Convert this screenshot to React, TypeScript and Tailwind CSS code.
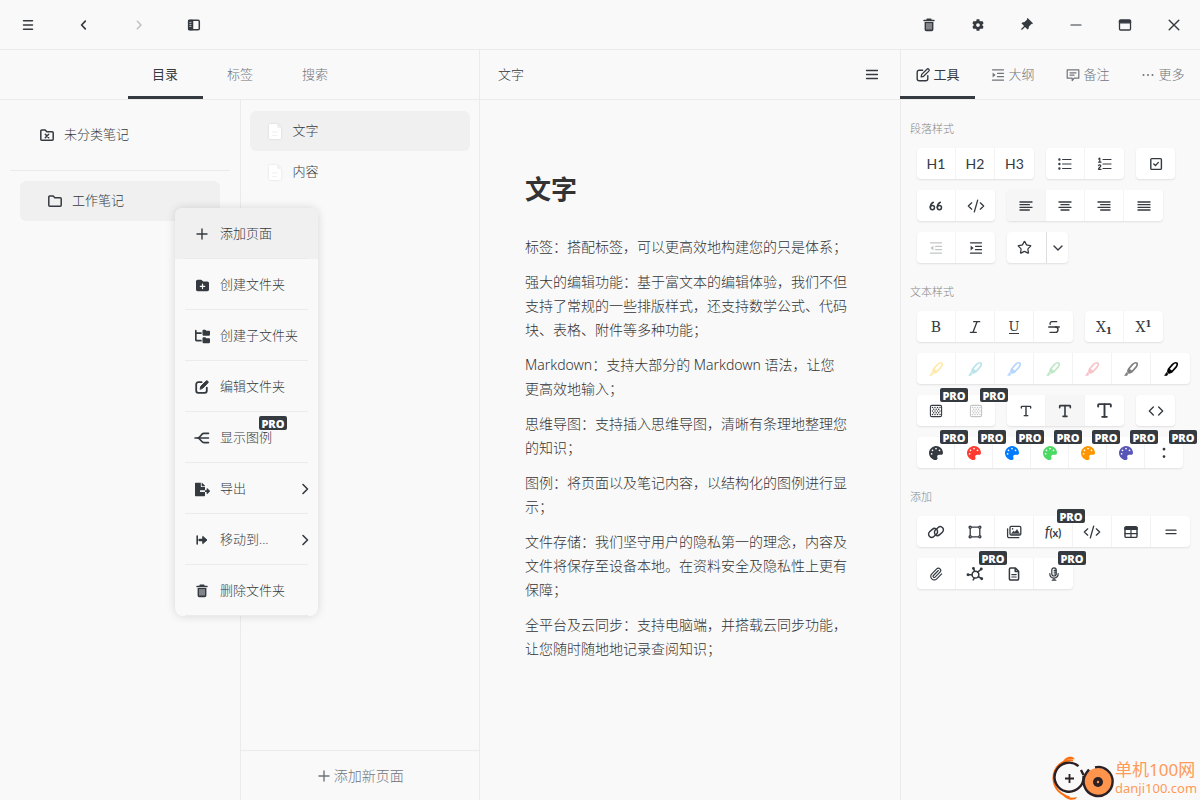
import type { ReactNode } from "react";
import { FaCog, FaFileExport, FaPalette } from "react-icons/fa";
import { FaFolderPlus, FaFolderTree } from "react-icons/fa6";
import { RiPushpinFill } from "react-icons/ri";
import {
  FiAlignCenter,
  FiAlignJustify,
  FiAlignLeft,
  FiAlignRight,
  FiCode,
} from "react-icons/fi";
import { Italic, Paperclip, Star, Strikethrough, Type } from "lucide-react";
import clsx from "clsx";

interface IconProps {
  children: ReactNode;
  width?: number;
  className?: string;
}

function Icon({ children, width = 1.5, className = "size-4" }: IconProps) {
  return (
    <svg
      viewBox="0 0 16 16"
      fill="none"
      stroke="currentColor"
      strokeWidth={width}
      strokeLinecap="round"
      strokeLinejoin="round"
      className={clsx("shrink-0", className)}
      aria-hidden="true"
    >
      {children}
    </svg>
  );
}

const TrashIcon = () => (
  <Icon width={1}>
    <path d="M3 3.6h10M6.2 3.2V2.3h3.6v.9" strokeWidth="1.5" />
    <path d="M3.6 5h8.8v7.6a1.6 1.6 0 0 1-1.6 1.6H5.2a1.6 1.6 0 0 1-1.6-1.6z" fill="currentColor" stroke="none" />
    <path d="M6 6.5v5.6M8 6.5v5.6M10 6.5v5.6" stroke="#f9f9f9" strokeWidth=".8" />
  </Icon>
);

const EditIcon = ({ bold = false }: { bold?: boolean }) => (
  <Icon width={bold ? 1.8 : 1.4}>
    <path d="M7.6 3.2H4.2a2 2 0 0 0-2 2v6.6a2 2 0 0 0 2 2h6.6a2 2 0 0 0 2-2V8.6" />
    <path
      d="M6.2 9.9l.5-2.5 5.2-5.2a1.3 1.3 0 0 1 1.9 1.9L8.6 9.3z"
      fill={bold ? "currentColor" : "none"}
      strokeWidth={bold ? 1 : 1.3}
    />
  </Icon>
);

const FolderIcon = ({ crossed = false }: { crossed?: boolean }) => (
  <Icon>
    <path d="M1.8 3.9a1 1 0 0 1 1-1h3.4l1.6 1.8h5.4a1 1 0 0 1 1 1v6.6a1 1 0 0 1-1 1H2.8a1 1 0 0 1-1-1z" />
    {crossed && <path d="M6.3 7.3l3.4 3.4M9.7 7.3l-3.4 3.4" />}
  </Icon>
);

const PageIcon = () => (
  <svg
    viewBox="0 0 12 15"
    className="h-[15px] w-3 drop-shadow-[0_0_1px_rgba(0,0,0,0.12)]"
    aria-hidden="true"
  >
    <path d="M1.5 0H8l4 4v9.5a1.5 1.5 0 0 1-1.5 1.5h-9A1.5 1.5 0 0 1 0 13.5v-12A1.5 1.5 0 0 1 1.5 0z" fill="#fff" />
    <path d="M8 0v3a1 1 0 0 0 1 1h3zM3 7.5h6v1H3zM3 11h5v1H3z" fill="#f1f1f1" />
  </svg>
);

const PlusIcon = () => (
  <Icon width={1.4}>
    <path d="M8 3v10M3 8h10" />
  </Icon>
);

const ChevronRight = () => (
  <Icon width={1.6}>
    <path d="M6 3.5L10.5 8 6 12.5" />
  </Icon>
);

const SlashCode = () => (
  <Icon width={1.2} className="size-[18px]">
    <path d="M4.2 5.2L1.2 8l3 2.8M11.8 5.2l3 2.8-3 2.8M9.5 2.8l-3 10.4" />
  </Icon>
);

const IndentIcon = ({ outdent = false }: { outdent?: boolean }) => (
  <Icon width={1.3}>
    <path d="M2.5 2.8h11M7.5 6.3h6M7.5 9.7h6M2.5 13.2h11" />
    <path d={outdent ? "M5.4 5.4v5.2L2.4 8z" : "M2.6 5.4v5.2l3-2.6z"} fill="currentColor" stroke="none" />
  </Icon>
);

const MarkerIcon = ({ color }: { color: string }) => (
  <svg viewBox="0 0 16 16" fill="none" className="size-4" aria-hidden="true">
    <path
      d="M5.6 8l4-4.6c1.6-1.500 3.400-1.900 4.300-1.300.6.800.2 2.500-1.100 4.300l-3.900 4.400z"
      stroke={color}
      strokeWidth="1.7"
      strokeLinejoin="round"
    />
    <path d="M5.200 7.600l4.200 3.600-1.500 1.100c-1.400.8-2.700.4-3.400-.4-.7-.9-.6-2.400.7-4.300z" fill={color} />
    <path d="M3.600 11.400l1.400 1.500-1 1.600H1.600z" fill={color} stroke={color} strokeLinejoin="round" strokeWidth=".6" />
  </svg>
);

const MosaicIcon = () => (
  <Icon width={1.1}>
    <rect x="2.4" y="2.4" width="11.2" height="11.2" rx="1.4" />
    <path
      d="M4.5 4.5h0M7 4.5h0M9.5 4.5h0M12 4.5h0M5.7 6.2h0M8.2 6.2h0M10.7 6.2h0M4.5 8h0M7 8h0M9.5 8h0M12 8h0M5.7 9.8h0M8.2 9.8h0M10.7 9.8h0M4.5 11.6h0M7 11.6h0M9.5 11.6h0M12 11.6h0"
      strokeWidth="1.5"
    />
  </Icon>
);

const CheckboxIcon = () => (
  <Icon width={1.4}>
    <rect x="2.8" y="2.6" width="10.6" height="10.8" rx="1" />
    <path d="M5.8 8l1.7 1.6 2.9-3.2" />
  </Icon>
);

const BulletsIcon = () => (
  <Icon width={1.2}>
    <path d="M5.6 3.5h8.4M5.6 8h8.4M5.6 12.5h8.4" />
    <path d="M2.4 3.5h0M2.4 8h0M2.4 12.5h0" strokeWidth="2.4" />
  </Icon>
);

const NumbersIcon = () => (
  <Icon width={1.2}>
    <path d="M6 3.5h8M6 8h8M6 12.5h8" />
    <path d="M1.6 3l1.2-.9v4M1.6 6.2h2.4M1.5 9.6c.4-1 2.3-1 2.3.3 0 1-2.3 1.9-2.3 3.4H4" />
  </Icon>
);

const LinkIcon = () => (
  <Icon width={1.3} className="size-[18px]">
    <rect x="-4.4" y="-2.8" width="8.8" height="5.6" rx="2.8" transform="translate(5.4 8.8) rotate(-42)" />
    <rect x="-4.4" y="-2.8" width="8.8" height="5.6" rx="2.8" transform="translate(10.6 7.2) rotate(-42)" />
  </Icon>
);

const BoundingIcon = () => (
  <Icon width={1.3}>
    <path d="M4.8 3.2h6.4M4.8 12.8h6.4M3.2 4.8v6.4M12.8 4.8v6.4" />
    <circle cx="3.2" cy="3.2" r="1.1" />
    <circle cx="12.8" cy="3.2" r="1.1" />
    <circle cx="3.2" cy="12.8" r="1.1" />
    <circle cx="12.8" cy="12.8" r="1.1" />
  </Icon>
);

const ImagesIcon = () => (
  <Icon width={1.3}>
    <rect x="4" y="2.4" width="10.8" height="8.6" rx="1.2" />
    <path d="M1.6 4.8v7.4a1.5 1.5 0 0 0 1.5 1.5h9.7" />
    <path d="M5.6 9.6L7.6 7l1.2 1.2L11 5.6l2.4 4z" fill="currentColor" strokeWidth=".6" />
    <path d="M6.6 4.9h0" strokeWidth="1.6" />
  </Icon>
);

const TableIcon = () => (
  <Icon width={1.4}>
    <rect x="2" y="2.6" width="12" height="10.8" rx="1.2" />
    <path d="M2 3.6h12v1.6H2z" fill="currentColor" />
    <path d="M8 6v7.4M2 9.7h12" strokeWidth="1.2" />
  </Icon>
);

const MindMapIcon = () => (
  <Icon width={1.4} className="size-[18px]">
    <circle cx="8.4" cy="8.6" r="3" />
    <path d="M5.4 8.6H2M10.4 6.4l3-2.6M11 10.4l2.8 1.6M7.6 5.6l-.8-2.2M7.4 11.6l-1 1.6" />
    <path d="M1.8 8.6h0M13.6 3.6h0M14 12.2h0M6.6 3h0" strokeWidth="2.6" />
  </Icon>
);

const DocumentIcon = () => (
  <Icon width={1.5}>
    <path d="M3.4 3.2a1.2 1.2 0 0 1 1.2-1.2h4.8l3.2 3.2v7.6a1.2 1.2 0 0 1-1.2 1.2H4.6a1.2 1.2 0 0 1-1.2-1.2zM9.2 2.2v3.2h3.2" />
    <path d="M5.8 8.6h4.4M5.8 11h4.4" strokeWidth="1.2" />
  </Icon>
);

const MicIcon = () => (
  <Icon width={1.2}>
    <rect x="5.8" y="1.8" width="4.4" height="8.2" rx="2.2" />
    <path d="M3.8 7.6c0 6 8.4 6 8.4 0M8 12.2v1.8M6.2 14.2h3.6M8.2 4.4h1.6M8.2 6.2h1.6M8.2 8h1.6" />
  </Icon>
);

function ProBadge({ className }: { className?: string }) {
  return (
    <span
      className={clsx(
        "pointer-events-none absolute z-10 flex h-[14px] w-7 items-center justify-center rounded-xs bg-[#343a40] font-['Open_Sans',sans-serif] text-[11px] leading-none font-extrabold text-white",
        className,
      )}
    >
      PRO
    </span>
  );
}

interface Tool {
  label: string;
  icon: ReactNode;
  pro?: boolean;
  active?: boolean;
  disabled?: boolean;
}

const groupStyle = "flex h-[31px] rounded-sm bg-white shadow-[0_1px_2px_rgba(0,0,0,0.1)]";

function ToolGroup({ tools, narrow = false }: { tools: Tool[]; narrow?: boolean }) {
  return (
    <div className={clsx(groupStyle, "divide-x divide-[#f3f3f3]")}>
      {tools.map((tool) => (
        <button
          key={tool.label}
          type="button"
          aria-label={tool.label}
          disabled={tool.disabled}
          className={clsx(
            "relative flex items-center justify-center first:rounded-l-sm last:rounded-r-sm",
            narrow ? "w-[38px]" : "w-[39px]",
            tool.active && "bg-[#f6f6f6]",
            tool.disabled && "text-[#c4c5c7]",
          )}
        >
          {tool.icon}
          {tool.pro && <ProBadge className={clsx("-top-[7px]", narrow ? "-right-[14px]" : "-right-[13px]")} />}
        </button>
      ))}
    </div>
  );
}

function ToolSection({ title, children }: { title: string; children: ReactNode }) {
  return (
    <section className="pt-[21px]">
      <h2 className="mb-[11px] pl-[9px] text-[11px] leading-4 text-[#888]">{title}</h2>
      <div className="flex flex-col gap-[11px] pl-4">{children}</div>
    </section>
  );
}

const Row = ({ children }: { children: ReactNode }) => <div className="flex gap-3">{children}</div>;

const Heading = ({ children }: { children: ReactNode }) => (
  <span className="font-['Lato',sans-serif] text-sm font-normal">{children}</span>
);

const Slab = ({ children }: { children: ReactNode }) => (
  <span className="font-['DejaVu_Serif',serif] text-sm leading-4 font-normal">{children}</span>
);

const highlights = [
  { label: "黄色高亮", color: "#ffe9ad" },
  { label: "青色高亮", color: "#b9e4ea" },
  { label: "蓝色高亮", color: "#b5d6ff" },
  { label: "绿色高亮", color: "#bfe8c8" },
  { label: "红色高亮", color: "#f7c3c9" },
  { label: "灰色高亮", color: "#808080" },
  { label: "黑色高亮", color: "#000000" },
];

const palette: Tool[] = [
  { label: "默认颜色", icon: <FaPalette className="size-[14px]" />, pro: true },
  { label: "红色", icon: <FaPalette className="size-[14px] text-[#ff3b30]" />, pro: true },
  { label: "蓝色", icon: <FaPalette className="size-[14px] text-[#007aff]" />, pro: true },
  { label: "绿色", icon: <FaPalette className="size-[14px] text-[#4cd964]" />, pro: true },
  { label: "橙色", icon: <FaPalette className="size-[14px] text-[#ff9500]" />, pro: true },
  { label: "紫色", icon: <FaPalette className="size-[14px] text-[#5856b6]" />, pro: true },
  {
    label: "更多颜色",
    icon: (
      <Icon width={2.8}>
        <path d="M8 4.2h0M8 11.6h0" />
      </Icon>
    ),
    pro: true,
  },
];

function ToolPanel() {
  return (
    <div>
      <ToolSection title="段落样式">
        <Row>
          <ToolGroup
            tools={[
              { label: "标题1", icon: <Heading>H1</Heading> },
              { label: "标题2", icon: <Heading>H2</Heading> },
              { label: "标题3", icon: <Heading>H3</Heading> },
            ]}
          />
          <ToolGroup
            tools={[
              { label: "无序列表", icon: <BulletsIcon /> },
              { label: "有序列表", icon: <NumbersIcon /> },
            ]}
          />
          <ToolGroup tools={[{ label: "待办", icon: <CheckboxIcon /> }]} />
        </Row>
        <Row>
          <ToolGroup
            tools={[
              {
                label: "引用",
                icon: (
                  <Icon width={1.5}>
                    <circle cx="4.4" cy="9.6" r="2.1" />
                    <circle cx="11.4" cy="9.6" r="2.1" />
                    <path d="M2.3 9.4c0-2.4.8-4.2 3-5.2M9.3 9.4c0-2.4.8-4.2 3-5.2" />
                  </Icon>
                ),
              },
              { label: "代码块", icon: <SlashCode /> },
            ]}
          />
          <ToolGroup
            tools={[
              { label: "左对齐", icon: <FiAlignLeft className="size-4" />, active: true },
              { label: "居中", icon: <FiAlignCenter className="size-4" /> },
              { label: "右对齐", icon: <FiAlignRight className="size-4" /> },
              { label: "两端对齐", icon: <FiAlignJustify className="size-4" /> },
            ]}
          />
        </Row>
        <Row>
          <ToolGroup
            tools={[
              { label: "减少缩进", icon: <IndentIcon outdent />, disabled: true },
              { label: "增加缩进", icon: <IndentIcon /> },
            ]}
          />
          <div className={groupStyle}>
            <button type="button" aria-label="收藏" className="flex w-[39px] items-center justify-center pr-1">
              <Star className="size-[15px]" />
            </button>
            <button
              type="button"
              aria-label="更多收藏"
              className="flex w-[22px] items-center justify-center border-l border-[#ddd]"
            >
              <Icon width={1.4}>
                <path d="M4 6l4 4 4-4" />
              </Icon>
            </button>
          </div>
        </Row>
      </ToolSection>

      <ToolSection title="文本样式">
        <Row>
          <ToolGroup
            tools={[
              { label: "加粗", icon: <Slab>B</Slab> },
              { label: "斜体", icon: <Italic className="size-4" /> },
              {
                label: "下划线",
                icon: (
                  <span className="flex border-b border-current leading-none">
                    <span className="font-['DejaVu_Serif',serif] text-[13px] leading-[13px] font-normal">U</span>
                  </span>
                ),
              },
              { label: "删除线", icon: <Strikethrough className="size-4" /> },
            ]}
          />
          <ToolGroup
            tools={[
              {
                label: "下标",
                icon: (
                  <Slab>
                    X<sub className="text-[9px] font-bold">1</sub>
                  </Slab>
                ),
              },
              {
                label: "上标",
                icon: (
                  <Slab>
                    X<sup className="text-[9px] font-bold">1</sup>
                  </Slab>
                ),
              },
            ]}
          />
        </Row>
        <Row>
          <ToolGroup
            tools={highlights.map((item) => ({
              label: item.label,
              icon: <MarkerIcon color={item.color} />,
            }))}
          />
        </Row>
        <Row>
          <ToolGroup
            tools={[
              { label: "马赛克", icon: <MosaicIcon />, pro: true },
              { label: "清除马赛克", icon: <MosaicIcon />, pro: true, disabled: true },
            ]}
          />
          <ToolGroup
            tools={[
              { label: "小号文字", icon: <Type className="size-[14px]" strokeWidth={2.4} /> },
              { label: "中号文字", icon: <Type className="size-4" strokeWidth={2.4} />, active: true },
              { label: "大号文字", icon: <Type className="size-[19px]" strokeWidth={2.4} /> },
            ]}
          />
          <ToolGroup tools={[{ label: "行内代码", icon: <FiCode className="size-4" /> }]} />
        </Row>
        <Row>
          <ToolGroup narrow tools={palette} />
        </Row>
      </ToolSection>

      <ToolSection title="添加">
        <Row>
          <ToolGroup
            tools={[
              { label: "链接", icon: <LinkIcon /> },
              { label: "画板", icon: <BoundingIcon /> },
              { label: "图片", icon: <ImagesIcon /> },
              {
                label: "公式",
                icon: (
                  <span className="flex items-baseline font-['Lato',sans-serif] text-[15px] leading-4 font-normal">
                    <i>f</i>
                    <span className="text-[11px] font-bold">(x)</span>
                  </span>
                ),
                pro: true,
              },
              { label: "代码", icon: <SlashCode /> },
              { label: "表格", icon: <TableIcon /> },
              {
                label: "分割线",
                icon: (
                  <Icon width={1.3}>
                    <path d="M3 6.2h10M3 9.6h10" />
                  </Icon>
                ),
              },
            ]}
          />
        </Row>
        <Row>
          <ToolGroup
            tools={[
              { label: "附件", icon: <Paperclip className="size-[14px]" /> },
              { label: "思维导图", icon: <MindMapIcon />, pro: true },
              { label: "文档", icon: <DocumentIcon /> },
              { label: "录音", icon: <MicIcon />, pro: true },
            ]}
          />
        </Row>
      </ToolSection>
    </div>
  );
}

interface MenuItem {
  label: string;
  icon: ReactNode;
  active?: boolean;
  pro?: boolean;
  submenu?: boolean;
}

const menuItems: MenuItem[] = [
  { label: "添加页面", icon: <PlusIcon />, active: true },
  { label: "创建文件夹", icon: <FaFolderPlus className="size-[13px]" /> },
  { label: "创建子文件夹", icon: <FaFolderTree className="size-[15px]" /> },
  { label: "编辑文件夹", icon: <EditIcon bold /> },
  {
    label: "显示图例",
    icon: (
      <Icon width={1.6}>
        <path d="M1 8h13.5M3 8c4.2 0 3.6-4.6 6.8-4.6h4.7M3 8c4.2 0 3.6 4.6 6.8 4.6h4.7" />
      </Icon>
    ),
    pro: true,
  },
  { label: "导出", icon: <FaFileExport className="size-[15px]" />, submenu: true },
  {
    label: "移动到...",
    icon: (
      <Icon width={1.6}>
        <path d="M3.2 4v8" />
        <path d="M9 4.6L13 8l-4 3.4z" fill="currentColor" strokeWidth="1" />
        <path d="M5.5 8H9" strokeWidth="2.4" />
      </Icon>
    ),
    submenu: true,
  },
  { label: "删除文件夹", icon: <TrashIcon /> },
];

function ContextMenu() {
  return (
    <ul
      role="menu"
      className="absolute top-[27px] left-[155px] z-20 w-[143px] overflow-hidden rounded-lg bg-[#f9f9f9] shadow-[0_0_10px_rgba(0,0,0,0.14)]"
    >
      {menuItems.map((item) => (
        <li key={item.label} role="none" className={clsx("px-[10px]", item.active && "bg-[#f0f0f0]")}>
          <button
            type="button"
            role="menuitem"
            className="flex h-[51px] w-full items-center border-b border-[#ebebeb] pt-[2px] text-left"
          >
            <span className="flex w-[35px] justify-center pr-px">{item.icon}</span>
            <span className="relative grow">
              {item.label}
              {item.pro && <ProBadge className="-top-3 left-[39px]" />}
            </span>
            {item.submenu && (
              <span className="-mr-[5px]">
                <ChevronRight />
              </span>
            )}
          </button>
        </li>
      ))}
    </ul>
  );
}

interface TabProps {
  label: string;
  icon?: ReactNode;
  active?: boolean;
}

function Tab({ label, icon, active }: TabProps) {
  return (
    <button
      type="button"
      role="tab"
      aria-selected={!!active}
      className={clsx(
        "flex w-[75px] items-center justify-center gap-[2px] border-b-[3px] pt-[3px]",
        active ? "border-[#343a40] font-normal text-[#343a40]" : "border-transparent text-[#70747a]",
      )}
    >
      {icon}
      {label}
    </button>
  );
}

const paragraphs = [
  "标签：搭配标签，可以更高效地构建您的只是体系；",
  "强大的编辑功能：基于富文本的编辑体验，我们不但支持了常规的一些排版样式，还支持数学公式、代码块、表格、附件等多种功能；",
  "Markdown：支持大部分的 Markdown 语法，让您更高效地输入；",
  "思维导图：支持插入思维导图，清晰有条理地整理您的知识；",
  "图例：将页面以及笔记内容，以结构化的图例进行显示；",
  "文件存储：我们坚守用户的隐私第一的理念，内容及文件将保存至设备本地。在资料安全及隐私性上更有保障；",
  "全平台及云同步：支持电脑端，并搭载云同步功能，让您随时随地地记录查阅知识；",
];

const windowButton = "flex h-full w-[49px] items-center justify-center";

function TitleBar() {
  return (
    <header className="flex h-[50px] shrink-0 items-center justify-between border-b border-[#ebebeb]">
      <div className="flex h-full">
        <button type="button" aria-label="菜单" className="flex w-14 items-center justify-center">
          <Icon>
            <path d="M3.5 3.8h9M3.5 8h9M3.5 12.2h9" />
          </Icon>
        </button>
        <button type="button" aria-label="后退" className="flex w-[55px] items-center justify-center">
          <Icon width={1.7}>
            <path d="M9.3 4.2L5.6 8l3.7 3.8" />
          </Icon>
        </button>
        <button type="button" aria-label="前进" disabled className="flex w-14 items-center justify-center text-[#c0c1c3]">
          <Icon>
            <path d="M6.3 4.2L10 8l-3.7 3.8" />
          </Icon>
        </button>
        <button type="button" aria-label="侧边栏" className="flex w-[54px] items-center justify-center">
          <Icon>
            <rect x="2.7" y="3.2" width="10.6" height="9.6" rx="1.2" />
            <path d="M2.7 3.6h3.8v8.8H2.7z" fill="currentColor" />
            <path d="M3.8 5.4h1.2M3.8 7.4h1.2M3.8 9.4h1.2" stroke="#f9f9f9" strokeWidth=".7" />
          </Icon>
        </button>
      </div>
      <div className="flex h-full pr-[2px]">
        <button type="button" aria-label="回收站" className={windowButton}>
          <TrashIcon />
        </button>
        <button type="button" aria-label="设置" className={windowButton}>
          <FaCog className="size-3" />
        </button>
        <button type="button" aria-label="置顶" className={windowButton}>
          <RiPushpinFill className="size-[15px]" />
        </button>
        <button type="button" aria-label="最小化" className={windowButton}>
          <Icon width={1.2}>
            <path d="M3 8h10" />
          </Icon>
        </button>
        <button type="button" aria-label="最大化" className={windowButton}>
          <Icon width={1.3}>
            <rect x="2.5" y="3" width="11" height="10" rx="1" />
            <path d="M2.5 3.6h11v2.2h-11z" fill="currentColor" />
          </Icon>
        </button>
        <button type="button" aria-label="关闭" className={windowButton}>
          <Icon width={1.4}>
            <path d="M3.2 3.2l9.6 9.6M12.8 3.2l-9.6 9.6" />
          </Icon>
        </button>
      </div>
    </header>
  );
}

function Sidebar() {
  return (
    <aside className="flex w-2/5 shrink-0 flex-col border-r border-[#ebebeb]">
      <div role="tablist" className="flex h-[50px] justify-center border-b border-[#ebebeb] pl-px">
        <Tab label="目录" active />
        <Tab label="标签" />
        <Tab label="搜索" />
      </div>
      <div className="flex grow">
        <nav className="w-1/2 px-[10px]">
          <div className="border-b border-[#ebebeb] pt-[15px] pb-[15px]">
            <button type="button" className="flex h-10 w-full items-center gap-[9px] pl-[29px]">
              <FolderIcon crossed />
              未分类笔记
            </button>
          </div>
          <div className="relative mx-[10px] mt-[10px]">
            <button type="button" className="flex h-10 w-full items-center gap-[9px] rounded-md bg-[#f0f0f0] pl-[27px]">
              <FolderIcon />
              工作笔记
            </button>
            <ContextMenu />
          </div>
        </nav>
        <div className="flex w-1/2 flex-col border-l border-[#ebebeb]">
          <div className="flex grow flex-col gap-px px-[9px] pt-[11px]">
            {["文字", "内容"].map((page, i) => (
              <button
                key={page}
                type="button"
                className={clsx("flex h-10 items-center gap-3 rounded-md pl-[19px]", i === 0 && "bg-[#f0f0f0]")}
              >
                <PageIcon />
                {page}
              </button>
            ))}
          </div>
          <button
            type="button"
            className="flex h-[50px] items-center justify-center border-t border-[#ebebeb] text-sm text-[#70747a]"
          >
            <PlusIcon />
            <span className="pl-[2px]">添加新页面</span>
          </button>
        </div>
      </div>
    </aside>
  );
}

function Watermark() {
  return (
    <div className="absolute right-0 bottom-0 flex items-center">
      <svg viewBox="0 0 66 44" className="h-11 w-[66px]" fill="none" aria-hidden="true">
        <path d="M24 4.5C13 3 4 12 4.5 23c.4 9 6 15 16 18.5" stroke="#ff6f0f" strokeWidth="2" />
        <path d="M13 8c4-5 8-5.5 13-4.5l-2-2.3c-5-1.2-9 .8-11 6.8zM13 37c4 4.5 9 5.5 15 4l-1.5 2.3c-6 1.5-11-.5-13.5-6.3z" fill="#ff6f0f" />
        <path d="M29.5 10.2A14.5 14.5 0 1 0 34.5 20M32 14l2.5 5" stroke="#2b2023" strokeWidth="2.4" />
        <path d="M20.500 18v9M16 22.500h9" stroke="#2b2023" strokeWidth="1.8" />
        <circle cx="49" cy="26" r="14" fill="#ff944d" />
        <path d="M37 17.5a14.5 14.5 0 1 0 9-6.2M37 17.5l3-4" stroke="#2b2023" strokeWidth="2.4" />
        <circle cx="49" cy="26" r="5" fill="#2b2023" />
        <circle cx="49" cy="26" r="1.2" fill="#ff944d" />
      </svg>
      <div className="w-[85px] font-normal text-[#ff9a58]">
        <p className="text-[17px] leading-5">单机100网</p>
        <p className="text-[13px] leading-4">danji100.com</p>
      </div>
    </div>
  );
}

export default function App() {
  return (
    <div className="relative flex min-h-screen flex-col bg-[#f9f9f9] font-['Noto_Sans','Noto_Sans_CJK_SC',sans-serif] text-[13px] font-light text-[#343a40]">
      <TitleBar />
      <div className="flex grow">
        <Sidebar />
        <main className="flex min-w-0 grow flex-col">
          <div className="flex h-[50px] items-center justify-between border-b border-[#ebebeb] pr-5 pl-[18px]">
            <span>文字</span>
            <button type="button" aria-label="页面菜单">
              <Icon width={1.3}>
                <path d="M2.5 3.5h11M2.5 7.5h11M2.5 11.5h11" />
              </Icon>
            </button>
          </div>
          <article className="pt-[71px] pr-[52px] pl-[45px] text-sm leading-6 text-[#333]">
            <h1 className="mb-[28px] text-[26px] leading-9 font-bold">文字</h1>
            <div className="flex flex-col gap-[11px]">
              {paragraphs.map((text) => (
                <p key={text}>{text}</p>
              ))}
            </div>
          </article>
        </main>
        <aside className="w-[300px] shrink-0 border-l border-[#ebebeb]">
          <div role="tablist" className="-ml-px flex h-[50px] border-b border-[#ebebeb]">
            <Tab label="工具" icon={<EditIcon />} active />
            <Tab label="大纲" icon={<IndentIcon />} />
            <Tab
              label="备注"
              icon={
                <Icon width={1.2}>
                  <path d="M2.2 2.8h11.6v8.4H9.2l-2 2.3v-2.3h-5z" />
                  <path d="M5 5.8h6M5 8.2h4" />
                </Icon>
              }
            />
            <Tab
              label="更多"
              icon={
                <Icon width={2}>
                  <path d="M3.5 8h0M8 8h0M12.5 8h0" />
                </Icon>
              }
            />
          </div>
          <ToolPanel />
        </aside>
      </div>
      <Watermark />
    </div>
  );
}
